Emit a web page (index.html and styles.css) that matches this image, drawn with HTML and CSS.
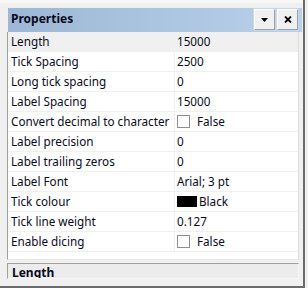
FILE: index.html
```html
<!DOCTYPE html>
<html lang="en">
<head>
  <meta charset="UTF-8" />
  <title>Properties</title>
  <link rel="stylesheet" href="styles.css">
</head>
<body>
  <div class="window">
    <div class="header">
      <span class="title">Properties</span>
      <div class="header-buttons">
        <button class="hbtn" title="Options">
          <svg width="7" height="4" viewBox="0 0 7 4"><path d="M0 0h7L3.5 4z" fill="#000"/></svg>
        </button>
        <button class="hbtn" title="Close">
          <svg width="8" height="7" viewBox="0 0 8 7"><path d="M1 0.5l6 6M7 0.5l-6 6" stroke="#000" stroke-width="1.8"/></svg>
        </button>
      </div>
    </div>

    <div class="grid">
      <div class="row selected"><div class="name">Length</div><div class="value">15000</div></div>
      <div class="row"><div class="name">Tick Spacing</div><div class="value">2500</div></div>
      <div class="row"><div class="name">Long tick spacing</div><div class="value">0</div></div>
      <div class="row"><div class="name">Label Spacing</div><div class="value">15000</div></div>
      <div class="row"><div class="name">Convert decimal to character</div><div class="value"><span class="check"></span>False</div></div>
      <div class="row"><div class="name">Label precision</div><div class="value">0</div></div>
      <div class="row"><div class="name">Label trailing zeros</div><div class="value">0</div></div>
      <div class="row"><div class="name">Label Font</div><div class="value">Arial; 3 pt</div></div>
      <div class="row"><div class="name">Tick colour</div><div class="value"><span class="swatch"></span>Black</div></div>
      <div class="row"><div class="name">Tick line weight</div><div class="value">0.127</div></div>
      <div class="row"><div class="name">Enable dicing</div><div class="value"><span class="check"></span>False</div></div>
    </div>

    <div class="description">
      <div class="desc-title">Length</div>
    </div>
  </div>
</body>
</html>
```

FILE: styles.css
```css
html, body {
  margin: 0;
  padding: 0;
}
body {
  width: 308px;
  height: 288px;
  overflow: hidden;
  background: #f0f0f0;
  font-family: "Noto Sans", sans-serif;
  font-size: 11.7px;
  color: #0a0a1e;
}
.window {
  box-sizing: border-box;
  width: 305px;
  height: 288px;
  padding: 8px 4px 0 7px;
  border-right: 2px solid #6b6b6b;
  border-bottom: 2px solid #6b6b6b;
  background: linear-gradient(#f7f7f7 0, #f7f7f7 3px, #f0f0f0 3px);
  overflow: hidden;
}
.header {
  height: 24px;
  margin: 0 -3px 0 1px;
  display: flex;
  align-items: flex-start;
  justify-content: space-between;
  background: linear-gradient(to right, #9db7d4, #b9d1ea);
}
.title {
  font-weight: bold;
  font-size: 12px;
  line-height: 21px;
  padding-left: 3px;
}
.header-buttons {
  display: flex;
  gap: 2px;
  margin: 1px 4px 0 0;
}
.hbtn {
  width: 21px;
  height: 21px;
  padding: 0;
  display: flex;
  align-items: center;
  justify-content: center;
  background: #f0f0f0;
  border: 1px solid;
  border-color: #ffffff #a0a0a0 #a0a0a0 #ffffff;
  box-shadow: 0 0 0 1px #c5d6ea;
}
.grid {
  height: 227px;
  background: #fff;
  border-left: 1px solid #a0a0a0;
  border-right: 1px solid #dcdcdc;
  border-bottom: 1px solid #e6e6e6;
}
.row {
  display: flex;
  height: 19px;
  border-bottom: 1px solid #f0f0f0;
  line-height: 19px;
}
.row.selected {
  background: #f0f0f0;
}
.name {
  width: 163px;
  padding-left: 3px;
  border-right: 1px solid #f0f0f0;
  white-space: nowrap;
  overflow: hidden;
}
.value {
  flex: 1;
  padding-left: 2px;
  display: flex;
  align-items: center;
  white-space: nowrap;
}
.check {
  width: 11px;
  height: 11px;
  margin: 0 7px 0 0;
  border: 1px solid #8e8f8f;
  background: #fff;
}
.swatch {
  width: 20px;
  height: 11px;
  margin-right: 2px;
  background: #000;
}
.description {
  height: 14px;
  margin-top: 3px;
  overflow: hidden;
  background: #ececec;
  border-top: 1px solid #a0a0a0;
  border-left: 1px solid #a0a0a0;
  border-right: 1px solid #f7f7f7;
  border-bottom: 1px solid #f7f7f7;
}
.desc-title {
  font-weight: bold;
  font-size: 12px;
  line-height: 16px;
  padding: 1px 0 0 4px;
}
```
